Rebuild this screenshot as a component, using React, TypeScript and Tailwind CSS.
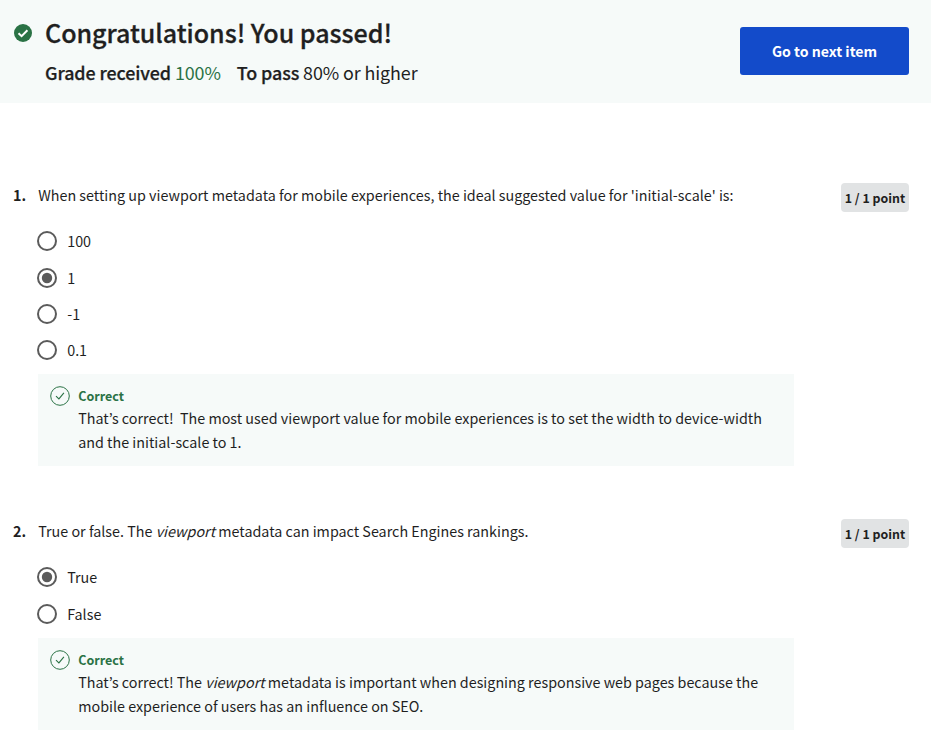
import type { ReactNode } from "react";

function Radio({ checked }: { checked?: boolean }) {
  return (
    <svg width="20" height="20" viewBox="0 0 20 20" className="block shrink-0">
      <circle cx="10" cy="10" r="9" fill="none" stroke="#5b5b5b" strokeWidth="2" />
      {checked && <circle cx="10" cy="10" r="5.2" fill="#5b5b5b" />}
    </svg>
  );
}

function Options({ items, picked }: { items: string[]; picked: number }) {
  return (
    <div className="flex flex-col pl-[37px]">
      {items.map((label, i) => (
        <div key={label} className="flex h-[36.4px] items-center gap-[10.2px]">
          <Radio checked={i === picked} />
          <span className="text-[14.33px] leading-5">{label}</span>
        </div>
      ))}
    </div>
  );
}

function Feedback({ children }: { children: ReactNode }) {
  return (
    <div className="ml-[38px] flex h-[92px] w-[756px] bg-[#f6faf9] pt-3 pl-3">
      <svg width="20" height="20" viewBox="0 0 20 20" className="block shrink-0" fill="none" stroke="#2a7245">
        <circle cx="10" cy="10" r="9.3" strokeWidth="1" />
        <path d="M6 10.2 8.9 12.9 13.9 6.8" strokeWidth="1.1" />
      </svg>
      <div className="ml-[8.2px]">
        <div className="text-[12.5px] leading-5 font-bold text-[#2a7245]">Correct</div>
        <div className="text-[14.33px] leading-6 whitespace-nowrap">{children}</div>
      </div>
    </div>
  );
}

function Question({ n, children }: { n: number; children: ReactNode }) {
  return (
    <div className="flex h-[29px] justify-between pr-[22px] pl-[13px]">
      <div className="flex text-[14.33px] leading-6 whitespace-nowrap">
        <b className="w-[25.2px]">{n}.</b>
        <p>{children}</p>
      </div>
      <div className="h-[29px] w-[68px] rounded-[4px] bg-[#e1e3e4] text-center text-[12.4px] leading-[30px] font-bold whitespace-nowrap">
        1 / 1 point
      </div>
    </div>
  );
}

export default function App() {
  return (
    <main className="h-[734px] w-[931px] overflow-hidden bg-white font-['Noto_Sans_CJK_KR',sans-serif] text-[#1f1f1f]">
      <header className="flex h-[103px] justify-between bg-[#f6faf9] pr-[22px] pl-[14px]">
        <div className="flex">
          <svg width="18" height="18" viewBox="0 0 18 18" className="mt-6 block">
            <circle cx="9" cy="9" r="9" fill="#2a7245" />
            <path d="M4.5 9.2 7.6 12.2 13.4 6.3" fill="none" stroke="#fff" strokeWidth="2" />
          </svg>
          <div className="ml-[13px] whitespace-nowrap">
            <h1 className="mt-[14px] text-[25.06px] leading-9 font-medium tracking-[-0.04px] [-webkit-text-stroke:0.3px_#1f1f1f]">Congratulations! You passed!</h1>
            <div className="mt-2 flex gap-4 text-[17.9px] leading-7 tracking-[-0.1px]">
              <span><b className="font-medium [-webkit-text-stroke:0.25px_#1f1f1f]">Grade received</b> <span className="text-[#2a7245]">100%</span></span>
              <span><b className="font-medium [-webkit-text-stroke:0.25px_#1f1f1f]">To pass</b> 80% or higher</span>
            </div>
          </div>
        </div>
        <button className="mt-[27px] h-12 w-[169px] rounded-[3px] bg-[#134bca] pt-0.5 text-[14.1px] font-bold text-white">Go to next item</button>
      </header>
      <section className="pt-20">
        <Question n={1}>When setting up viewport metadata for mobile experiences, the ideal suggested value for 'initial-scale' is:</Question>
        <div className="mt-[11px] h-[151px]"><Options items={["100", "1", "-1", "0.1"]} picked={1} /></div>
        <Feedback>That’s correct!&nbsp; The most used viewport value for mobile experiences is to set the width to device-width<br />and the initial-scale to 1.</Feedback>
      </section>
      <section className="pt-[53px]">
        <Question n={2}>True or false. The <i>viewport</i> metadata can impact Search Engines rankings.</Question>
        <div className="mt-[11px] h-[79px]"><Options items={["True", "False"]} picked={0} /></div>
        <Feedback>That’s correct! The <i>viewport</i> metadata is important when designing responsive web pages because the<br />mobile experience of users has an influence on SEO.</Feedback>
      </section>
    </main>
  );
}
